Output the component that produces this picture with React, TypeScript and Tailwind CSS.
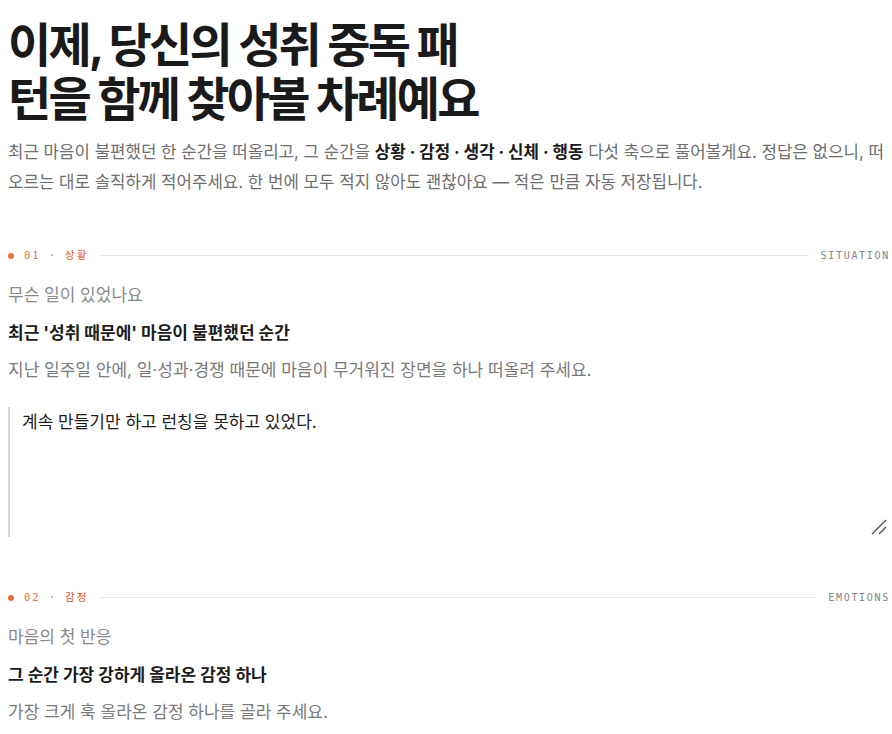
import { useState } from "react";

const KR = "font-['Inter','Noto_Sans_CJK_KR',sans-serif]";

function SectionRule({ no, label, en }: { no: string; label: string; en: string }) {
  return (
    <div className="flex items-center gap-3">
      <span className="flex items-center gap-2.5 font-['DejaVu_Sans_Mono','Noto_Sans_CJK_KR',monospace] text-[10.5px] font-medium tracking-[0.18em] text-[#e8703f]">
        <span className="h-1.5 w-1.5 rounded-full bg-[#e8703f]" />
        <span>
          {no} · {label}
        </span>
      </span>
      <span className="h-px flex-1 bg-[#e8e8e8]" />
      <span className="-mr-[2px] font-['DejaVu_Sans_Mono',monospace] text-[10px] font-medium tracking-[0.17em] text-[#858585]">
        {en}
      </span>
    </div>
  );
}

function Prompt({ kicker, title, desc }: { kicker: string; title: string; desc: string }) {
  return (
    <div className="mt-[17px]">
      <p className="text-[17px] leading-[28px] text-[#8a8a8a]">{kicker}</p>
      <h3 className="mt-[10px] text-[17px] font-bold leading-[28px] text-[#1c1c1c]">{title}</h3>
      <p className="mt-[9px] text-[17px] leading-[28px] text-[#7a7a7a]">{desc}</p>
    </div>
  );
}

export default function App() {
  const [situation, setSituation] = useState("계속 만들기만 하고 런칭을 못하고 있었다.");

  return (
    <div className={`${KR} min-h-screen bg-white pl-2 pr-1 pt-[18px] text-[#1c1c1c]`}>
      <h1 className="max-w-[475px] text-[47px] font-bold leading-[54px] tracking-[-0.06em] text-[#1a1a1a]">
        이제, 당신의 성취 중독 패턴을 함께 찾아볼 차례예요
      </h1>
      <p className="mt-[11px] pr-[2px] text-[16.8px] leading-[30px] text-[#6e6e6e]">
        최근 마음이 불편했던 한 순간을 떠올리고, 그 순간을{" "}
        <b className="font-bold text-[#1a1a1a]">상황 · 감정 · 생각 · 신체 · 행동</b> 다섯 축으로
        풀어볼게요. 정답은 없으니, 떠오르는 대로 솔직하게 적어주세요. 한 번에 모두 적지 않아도
        괜찮아요 — 적은 만큼 자동 저장됩니다.
      </p>

      <section className="mt-[51px]">
        <SectionRule no="01" label="상황" en="SITUATION" />
        <Prompt
          kicker="무슨 일이 있었나요"
          title="최근 '성취 때문에' 마음이 불편했던 순간"
          desc="지난 일주일 안에, 일·성과·경쟁 때문에 마음이 무거워진 장면을 하나 떠올려 주세요."
        />
        <div className="relative mt-[23px]">
          <textarea
            value={situation}
            onChange={(e) => setSituation(e.target.value)}
            className="block h-[130px] w-full resize-none border-l-2 border-[#d4d4d4] bg-transparent px-[12px] py-[1px] text-[17px] leading-[28px] text-[#1c1c1c] outline-none"
          />
          <svg
            className="pointer-events-none absolute bottom-[2px] right-[1px] h-4 w-4 text-[#555]"
            viewBox="0 0 16 16"
            fill="none"
            stroke="currentColor"
            strokeWidth="1.4"
          >
            <path d="M1 15 L15 1" />
            <path d="M8 15 L15 8" />
          </svg>
        </div>
      </section>

      <section className="mt-[53px]">
        <SectionRule no="02" label="감정" en="EMOTIONS" />
        <Prompt
          kicker="마음의 첫 반응"
          title="그 순간 가장 강하게 올라온 감정 하나"
          desc="가장 크게 훅 올라온 감정 하나를 골라 주세요."
        />
      </section>
    </div>
  );
}
